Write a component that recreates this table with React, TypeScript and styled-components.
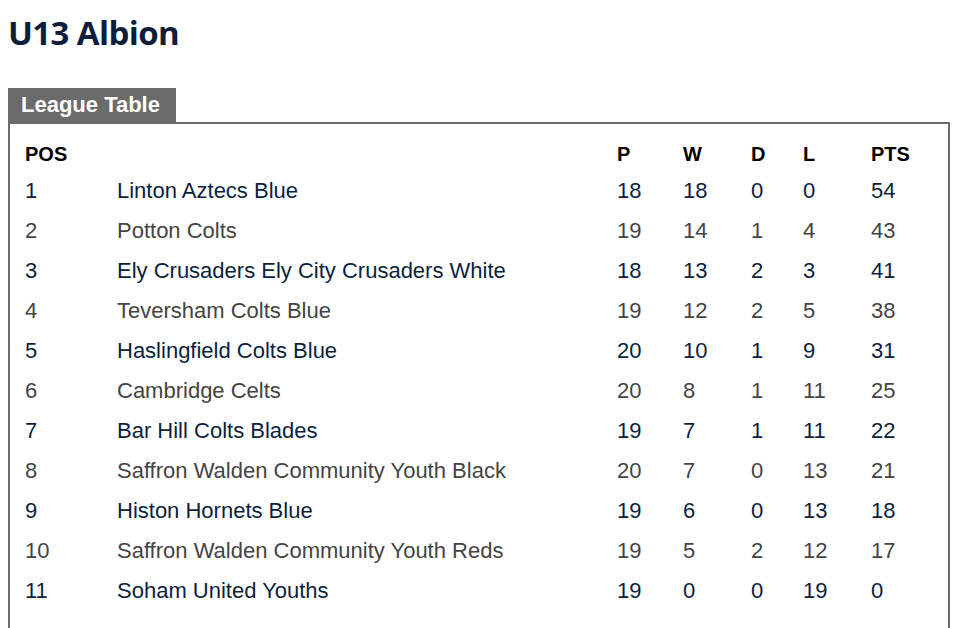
import React from "react"
import styled, { createGlobalStyle } from "styled-components"

const GlobalStyle = createGlobalStyle`
  body {
    margin: 8px;
    background: #ffffff;
    font-family: "Liberation Sans", Arial, sans-serif;
  }
`;

const Title = styled.h1`
  margin: 3px 0 0 0;
  font-family: "Open Sans", "Liberation Sans", sans-serif;
  font-weight: 700;
  font-size: 33px;
  line-height: 44px;
  color: #0c1e3c;
  letter-spacing: -0.6px;
`;

const Tab = styled.div`
  display: inline-block;
  margin-top: 33px;
  background: #6b6b6b;
  color: #ffffff;
  font-weight: 700;
  font-size: 22px;
  line-height: 34px;
  padding: 0 16px 0 13px;
  vertical-align: top;
`;

const Panel = styled.div`
  margin-right: 2px;
  border: 2px solid #6b6b6b;
  border-bottom: none;
  padding: 13px 15px 20px 15px;
`;

const Row = styled.div<{ $head?: boolean; $alt?: boolean }>`
  display: grid;
  grid-template-columns: 92px 500px 66px 68px 52px 68px 1fr;
  height: ${(p) => (p.$head ? "34px" : "40px")};
  align-items: center;
  font-size: ${(p) => (p.$head ? "20px" : "22px")};
  font-weight: ${(p) => (p.$head ? 700 : 400)};
  color: ${(p) => (p.$head ? "#000000" : p.$alt ? "#444444" : "#0b1f3f")};
`;

const Cell = styled.div`
  white-space: nowrap;
`;

const rows: [number, string, number, number, number, number, number][] = [
  [1, "Linton Aztecs Blue", 18, 18, 0, 0, 54],
  [2, "Potton Colts", 19, 14, 1, 4, 43],
  [3, "Ely Crusaders Ely City Crusaders White", 18, 13, 2, 3, 41],
  [4, "Teversham Colts Blue", 19, 12, 2, 5, 38],
  [5, "Haslingfield Colts Blue", 20, 10, 1, 9, 31],
  [6, "Cambridge Celts", 20, 8, 1, 11, 25],
  [7, "Bar Hill Colts Blades", 19, 7, 1, 11, 22],
  [8, "Saffron Walden Community Youth Black", 20, 7, 0, 13, 21],
  [9, "Histon Hornets Blue", 19, 6, 0, 13, 18],
  [10, "Saffron Walden Community Youth Reds", 19, 5, 2, 12, 17],
  [11, "Soham United Youths", 19, 0, 0, 19, 0],
];

const App = () => (
  <>
    <GlobalStyle />
    <Title>U13 Albion</Title>
    <Tab>League Table</Tab>
    <Panel>
      <Row $head>
        <Cell>POS</Cell>
        <Cell></Cell>
        <Cell>P</Cell>
        <Cell>W</Cell>
        <Cell>D</Cell>
        <Cell>L</Cell>
        <Cell>PTS</Cell>
      </Row>
      {rows.map((r, i) => (
        <Row key={r[0]} $alt={i % 2 === 1}>
          {r.map((v, j) => (
            <Cell key={j}>{v}</Cell>
          ))}
        </Row>
      ))}
    </Panel>
  </>
);

export default App;
